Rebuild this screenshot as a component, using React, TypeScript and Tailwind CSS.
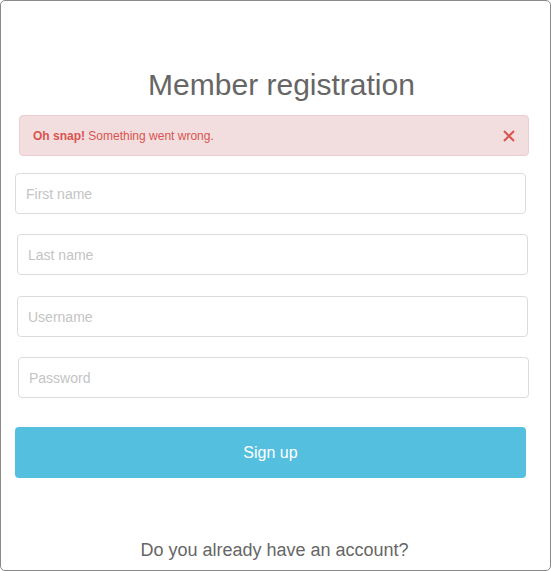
import { useState } from 'react';

const font = { fontFamily: '"Liberation Sans", Arial, sans-serif' };

export default function App() {
  const [showAlert, setShowAlert] = useState(true);

  const fields = [
    { name: 'first', placeholder: 'First name', type: 'text', cls: 'ml-[14px] mt-[17px]' },
    { name: 'last', placeholder: 'Last name', type: 'text', cls: 'ml-[16px] mt-[20px]' },
    { name: 'user', placeholder: 'Username', type: 'text', cls: 'ml-[16px] mt-[21px]' },
    { name: 'pass', placeholder: 'Password', type: 'password', cls: 'ml-[17px] mt-[20px]' },
  ];

  return (
    <div
      className="w-[551px] h-[571px] box-border border border-[#8a8a8a] rounded-[5px] bg-white overflow-hidden"
      style={font}
    >
      <h1 className="mt-[67px] pl-[12px] text-center text-[30px] leading-[33px] text-[#666] font-normal">
        Member registration
      </h1>

      {showAlert && (
        <div className="ml-[18px] mt-[14px] w-[510px] h-[41px] flex items-center justify-between rounded-[4px] border border-[#ebccd1] bg-[#f2dede] pl-[13px] pr-[12px] text-[12px] text-[#d9534f]">
          <p>
            <b>Oh snap!</b> Something went wrong.
          </p>
          <button type="button" onClick={() => setShowAlert(false)} className="w-[14px] h-[14px]">
            <svg viewBox="0 0 14 14" width="14" height="14">
              <path d="M2 2 L12 12 M12 2 L2 12" stroke="#d9534f" strokeWidth="2" />
            </svg>
          </button>
        </div>
      )}

      {fields.map((f) => (
        <input
          key={f.name}
          type={f.type}
          placeholder={f.placeholder}
          className={`${f.cls} block w-[511px] h-[41px] box-border rounded-[4px] border border-[#dcdcdc] px-[10px] text-[14px] text-[#555] placeholder:text-[#c4c4c4] outline-none`}
        />
      ))}

      <button
        type="button"
        className="ml-[14px] mt-[29px] block w-[511px] h-[51px] rounded-[4px] bg-[#55bfdf] text-[16px] text-white"
      >
        Sign up
      </button>

      <p className="mt-[62px] pr-[2px] text-center text-[18px] leading-[21px] text-[#666]">
        Do you already have an account?
      </p>
    </div>
  );
}
